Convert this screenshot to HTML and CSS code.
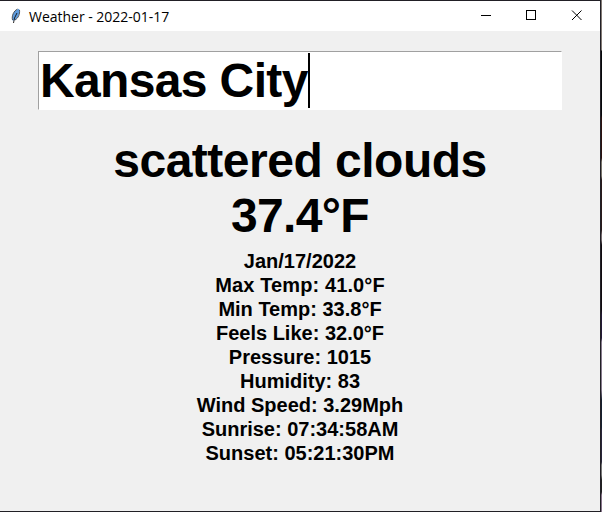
FILE: index.html
```html
<!DOCTYPE html>
<html lang="en">
<head>
<meta charset="utf-8">
<title>Weather - 2022-01-17</title>
<link rel="stylesheet" href="styles.css">
</head>
<body>
<div class="desktop">
<div class="window">
  <header class="titlebar">
    <svg class="feather" width="16" height="16" viewBox="0 0 16 16"><path d="M5.500 12.500C4.500 8 6.500 2 12 0.700C13.500 3 12 10 7 12.500Z" fill="#5f9bdc"/><path d="M5.500 12C4.500 8 6.500 3 10.500 1M12.500 2C13 6 11.500 10 8 12" stroke="#333" stroke-width=".8" fill="none"/><path d="M6.500 15L7.500 10L10 5" stroke="#111" stroke-width=".9" fill="none"/></svg>
    <span class="title">Weather - 2022-01-17</span>
    <svg class="controls" width="138" height="30" viewBox="0 0 138 30" fill="none" stroke="#000"><path d="M18 14.500H28"/><rect x="63.500" y="9.500" width="9" height="9"/><path d="M109 9.500L118.500 19M118.500 9.500L109 19"/></svg>
  </header>
  <main class="content">
    <div class="city">Kansas City<span class="caret"></span></div>
    <div class="summary"><div>scattered clouds</div><div class="temp">37.4°F</div></div>
    <div class="details">
      <div>Jan/17/2022</div><div class="wide">Max Temp: 41.0°F</div><div>Min Temp: 33.8°F</div><div>Feels Like: 32.0°F</div><div>Pressure: 1015</div><div>Humidity: 83</div><div>Wind Speed: 3.29Mph</div><div>Sunrise: 07:34:58AM</div><div>Sunset: 05:21:30PM</div>
    </div>
  </main>
</div>
</div>
</body>
</html>
```
FILE: styles.css
```css
* { box-sizing: border-box; }
body { margin: 0; overflow: hidden; font-family: "Liberation Sans", sans-serif; color: #000; }
.desktop { width: 602px; height: 512px; background: linear-gradient(#817974 0 50px, #07080b 51px 115px, #2b1210 118px 158px, #77736a 162px 176px, #291b1c 180px 230px, #776c70 235px 240px, #100b10 245px 310px, #241a37 315px 338px, #85798b 342px 390px, #17202f 400px 427px, #29263a 430px 462px, #777 465px 475px, #222 480px 492px, #87738a 495px); }
.window { width: 601px; height: 512px; border: solid #211f25; border-width: 1px 1px 1px 0; background: #f0f0f0; }
.titlebar { display: flex; align-items: center; height: 30px; background: #fff; padding-left: 7px; }
.feather { margin-top: -1px; }
.title { margin-left: 6px; font: 14px "Open Sans", sans-serif; letter-spacing: -.02px; }
.controls { margin-left: auto; margin-right: -1px; }
.content { padding: 20px 38px 0; }
.city { display: flex; align-items: center; height: 59px; padding-left: 1px; background: #fff; border: 1px solid #fff; border-top-color: #a0a0a0; border-left-color: #a0a0a0; font-weight: 700; font-size: 48px; line-height: 55px; letter-spacing: -.64px; }
.caret { width: 2px; height: 55px; background: #000; }
.summary { margin-top: 23px; text-align: center; font-weight: 700; font-size: 48px; line-height: 55px; letter-spacing: -.5px; }
.temp { letter-spacing: -.65px; }
.details { margin-top: 6px; text-align: center; font-weight: 700; font-size: 20px; line-height: 24px; }
.wide { letter-spacing: .12px; }
```
